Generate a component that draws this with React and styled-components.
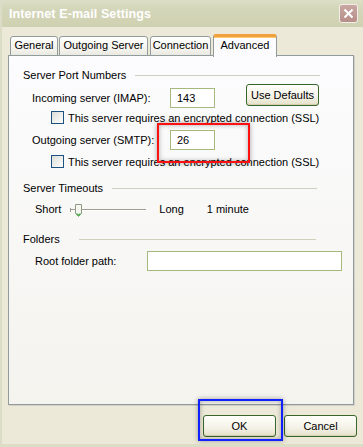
import React from 'react';
import styled, { createGlobalStyle } from 'styled-components';

const Global = createGlobalStyle`
  html, body {
    margin: 0;
    padding: 0;
    background: #ece9d8;
  }
  body {
    font-family: 'Liberation Sans', Arial, sans-serif;
    font-size: 11px;
    color: #000;
  }
`;

const Slider = () => (
  <SliderBox>
    <svg width="77" height="14" viewBox="0 0 77 14">
      <line x1="0" y1="5.5" x2="76" y2="5.5" stroke="#9d9d92" strokeWidth="1" />
      <line x1="0" y1="6.5" x2="76" y2="6.5" stroke="#ffffff" strokeWidth="1" />
      <line x1="0.5" y1="4" x2="0.5" y2="8" stroke="#9d9d92" />
      <path d="M5.5 0.5 H11.5 V9.5 L8.5 12.5 L5.5 9.5 Z" fill="#f7f7f2" stroke="#8d9a84" />
      <path d="M6.5 9.5 L8.5 11.5 L10.5 9.5" fill="none" stroke="#4bb64b" strokeWidth="1.2" />
    </svg>
  </SliderBox>
);

export default function App() {
  return (
    <>
      <Global />
      <Window>
        <TitleBar>
          <Title>Internet E-mail Settings</Title>
          <CloseButton>
            <svg width="11" height="11" viewBox="0 0 11 11">
              <path d="M1.5 1.5 L9.5 9.5 M9.5 1.5 L1.5 9.5" stroke="#fff" strokeWidth="2" />
            </svg>
          </CloseButton>
        </TitleBar>
        <Body>
          <Tabs>
            <Tab width={48}>General</Tab>
            <Tab width={89} gap={1}>Outgoing Server</Tab>
            <Tab width={61} gap={2}>Connection</Tab>
            <Tab width={64} gap={2} selected>Advanced</Tab>
          </Tabs>
          <Panel>
            <SectionHeader>
              <span>Server Port Numbers</span>
              <Rule lineGap={9} />
            </SectionHeader>
            <FieldRow cols="138px 45px" top={6}>
              <span>Incoming server (IMAP):</span>
              <TextBox>143</TextBox>
              <Button width={73} style={{ marginLeft: 31, alignSelf: 'start', marginTop: -4 }}>Use Defaults</Button>
            </FieldRow>
            <CheckRow top={3}>
              <CheckBox />
              <span>This server requires an encrypted connection (SSL)</span>
            </CheckRow>
            <FieldRow cols="138px 45px" top={6}>
              <span>Outgoing server (SMTP):</span>
              <TextBox>26</TextBox>
            </FieldRow>
            <CheckRow top={5}>
              <CheckBox />
              <span>This server requires an encrypted connection (SSL)</span>
            </CheckRow>

            <SectionHeader top={13}>
              <span>Server Timeouts</span>
              <Rule lineGap={9} endGap={3} />
            </SectionHeader>
            <SliderRow>
              <span>Short</span>
              <Slider />
              <SliderLabel gap={12}>Long</SliderLabel>
              <SliderLabel gap={23}>1 minute</SliderLabel>
            </SliderRow>

            <SectionHeader top={13}>
              <span>Folders</span>
              <Rule lineGap={19} endGap={4} />
            </SectionHeader>
            <FieldRow cols="112px 195px" top={5} indent={12}>
              <span>Root folder path:</span>
              <TextBox />
            </FieldRow>
          </Panel>
          <ButtonBar>
            <Button width={73}>OK</Button>
            <Button width={73}>Cancel</Button>
          </ButtonBar>
        </Body>
        <Highlight color="#ff1010" style={{ left: 155, top: 123, width: 93, height: 40 }} />
        <Highlight color="#1020ff" style={{ left: 196, top: 399, width: 85, height: 42 }} />
      </Window>
    </>
  );
}

const Window = styled.div`
  position: relative;
  width: 363px;
  height: 447px;
  box-sizing: border-box;
  background: #ece9d8;
  border-left: 2px solid #dcddc6;
  border-bottom: 3px solid #dcddc6;
  display: flex;
  flex-direction: column;
  overflow: hidden;
`;

const TitleBar = styled.div`
  height: 27px;
  margin-left: -2px;
  display: flex;
  align-items: center;
  justify-content: space-between;
  padding: 0 5px 0 9px;
  background: linear-gradient(#dcdec6 0%, #d3d5b8 40%, #cfd2b1 100%);
  box-sizing: border-box;
`;

const Title = styled.div`
  font-family: 'Liberation Sans', Arial, sans-serif;
  font-weight: bold;
  font-size: 12.5px;
  color: #ffffff;
  letter-spacing: 0.1px;
`;

const CloseButton = styled.div`
  width: 17px;
  height: 17px;
  border: 1px solid #f3ece8;
  border-radius: 3px;
  background: linear-gradient(#c8a7a2, #b78e88);
  display: flex;
  align-items: center;
  justify-content: center;
  margin-top: -1px;
`;

const Body = styled.div`
  display: flex;
  flex-direction: column;
  padding: 7px 0 0 6px;
`;

const Tabs = styled.div`
  display: flex;
  align-items: flex-end;
  height: 22px;
  padding-left: 2px;
  position: relative;
  z-index: 1;
  margin-bottom: -1px;
`;

const Tab = styled.div`
  width: ${p => p.width}px;
  margin-left: ${p => (p.gap || 0)}px;
  height: ${p => (p.selected ? 23 : 20)}px;
  box-sizing: border-box;
  border: 1px solid #919b9c;
  border-bottom: ${p => (p.selected ? 'none' : '1px solid #919b9c')};
  border-top: ${p => (p.selected ? '3px solid #f0a13c' : '1px solid #919b9c')};
  border-radius: 3px 3px 0 0;
  background: ${p => (p.selected ? '#fcfcfe' : 'linear-gradient(#ffffff, #f3f2ec 70%, #e9e8e1)')};
  text-align: center;
  line-height: ${p => (p.selected ? 16 : 17)}px;
  white-space: nowrap;
  ${p => p.selected && 'margin-bottom: -1px; box-shadow: inset 0 1px 0 #ffc873;'}
`;

const Panel = styled.div`
  width: 346px;
  height: 350px;
  box-sizing: border-box;
  border: 1px solid #919b9c;
  background: linear-gradient(#fcfcfe, #f4f3ee);
  padding: 12px 33px 0 14px;
  display: flex;
  flex-direction: column;
  box-shadow: 1px 1px 0 #d0cfc8;
`;

const SectionHeader = styled.div`
  display: flex;
  align-items: center;
  height: 14px;
  margin-top: ${p => p.top || 0}px;
  white-space: nowrap;
`;

const Rule = styled.div`
  flex: 1;
  height: 1px;
  background: #d0d0bf;
  margin-left: ${p => p.lineGap}px;
  margin-right: ${p => p.endGap || 0}px;
  margin-top: 1px;
`;

const FieldRow = styled.div`
  display: grid;
  grid-template-columns: ${p => p.cols} auto;
  align-items: center;
  height: 20px;
  margin-top: ${p => p.top || 0}px;
  padding-left: ${p => p.indent || 9}px;
  white-space: nowrap;
`;

const TextBox = styled.div`
  height: 20px;
  box-sizing: border-box;
  border: 1px solid #a5b97f;
  background: #ffffff;
  padding-left: 6px;
  line-height: 18px;
`;

const CheckRow = styled.div`
  display: flex;
  align-items: center;
  gap: 4px;
  height: 13px;
  padding-left: 28px;
  margin-top: ${p => p.top || 0}px;
  white-space: nowrap;
`;

const CheckBox = styled.div`
  width: 13px;
  height: 13px;
  box-sizing: border-box;
  border: 1px solid #1c5180;
  background: linear-gradient(135deg, #dcdcd7, #ffffff);
  flex: none;
`;

const SliderRow = styled.div`
  display: flex;
  align-items: center;
  height: 20px;
  margin-top: 4px;
  padding-left: 12px;
  white-space: nowrap;
`;

const SliderBox = styled.div`
  margin-left: 9px;
  width: 77px;
  height: 14px;
  display: flex;
  margin-top: 3px;
`;

const SliderLabel = styled.span`
  margin-left: ${p => p.gap}px;
`;

const ButtonBar = styled.div`
  display: flex;
  justify-content: flex-end;
  gap: 8px;
  margin-top: 10px;
  padding-right: 6px;
`;

const Button = styled.div`
  width: ${p => p.width}px;
  height: 22px;
  box-sizing: border-box;
  border: 1px solid #37652a;
  border-radius: 3px;
  background: linear-gradient(#fffffb, #f4f2e7 60%, #e4e0c9);
  box-shadow: inset 0 -1px 0 #d6d0b4;
  text-align: center;
  line-height: 20px;
  white-space: nowrap;
`;

const Highlight = styled.div`
  position: absolute;
  box-sizing: border-box;
  border: 2px solid ${p => p.color};
  box-shadow: 0 0 5px rgba(0, 0, 0, 0.35), inset 0 0 5px rgba(0, 0, 0, 0.3);
  pointer-events: none;
`;
